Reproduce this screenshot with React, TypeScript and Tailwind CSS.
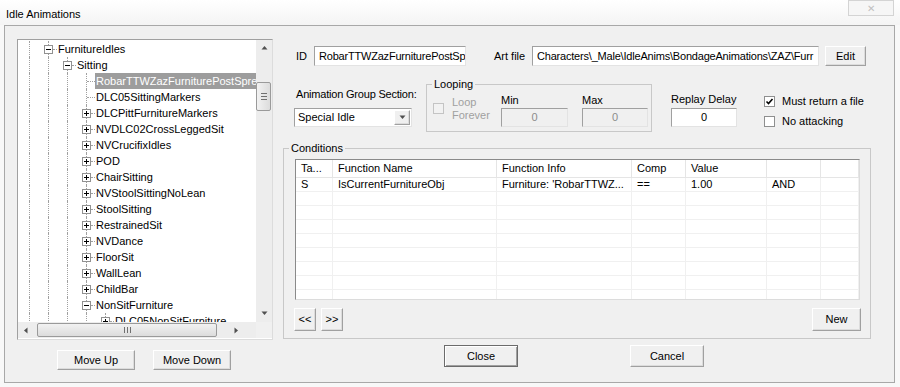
import React from "react";

type Cell = "line" | "tee" | "minus" | "plus";

const dot = "border-dotted border-[#a0a0a0]";

const TreeCell = ({ kind }: { kind: Cell }) => {
  if (kind === "line") {
    return (
      <div className="w-[19px] h-full flex shrink-0">
        <div className="w-[10px]" />
        <div className={`w-px h-full border-l ${dot}`} />
      </div>
    );
  }
  if (kind === "tee") {
    return (
      <div className="w-[19px] h-full flex items-center shrink-0">
        <div className="w-[10px]" />
        <div className={`w-px h-full border-l ${dot}`} />
        <div className={`flex-1 h-0 border-t ${dot}`} />
      </div>
    );
  }
  return (
    <div className="w-[19px] h-full flex items-center shrink-0">
      <div className="w-[6px]" />
      <div className="w-[9px] h-full flex flex-col items-center">
        <div className={`w-px flex-1 border-l ${dot}`} />
        <div className="w-[9px] h-[9px] shrink-0 border border-[#919191] bg-white flex items-center justify-center">
          <svg width="7" height="7" viewBox="0 0 7 7" shapeRendering="crispEdges">
            <path d="M1 3.5H6" stroke="#000" strokeWidth="1" />
            {kind === "plus" && <path d="M3.5 1V6" stroke="#000" strokeWidth="1" />}
          </svg>
        </div>
        <div className={`w-px flex-1 border-l ${dot}`} />
      </div>
      <div className={`flex-1 h-0 border-t ${dot}`} />
    </div>
  );
};

const treeRows: { cells: Cell[]; label: string; selected?: boolean }[] = [
  { cells: ["line", "minus"], label: "FurnitureIdles" },
  { cells: ["line", "line", "minus"], label: "Sitting" },
  { cells: ["line", "line", "line", "tee"], label: "RobarTTWZazFurniturePostSpread", selected: true },
  { cells: ["line", "line", "line", "tee"], label: "DLC05SittingMarkers" },
  { cells: ["line", "line", "line", "plus"], label: "DLCPittFurnitureMarkers" },
  { cells: ["line", "line", "line", "plus"], label: "NVDLC02CrossLeggedSit" },
  { cells: ["line", "line", "line", "plus"], label: "NVCrucifixIdles" },
  { cells: ["line", "line", "line", "plus"], label: "POD" },
  { cells: ["line", "line", "line", "plus"], label: "ChairSitting" },
  { cells: ["line", "line", "line", "plus"], label: "NVStoolSittingNoLean" },
  { cells: ["line", "line", "line", "plus"], label: "StoolSitting" },
  { cells: ["line", "line", "line", "plus"], label: "RestrainedSit" },
  { cells: ["line", "line", "line", "plus"], label: "NVDance" },
  { cells: ["line", "line", "line", "plus"], label: "FloorSit" },
  { cells: ["line", "line", "line", "plus"], label: "WallLean" },
  { cells: ["line", "line", "line", "plus"], label: "ChildBar" },
  { cells: ["line", "line", "line", "minus"], label: "NonSitFurniture" },
  { cells: ["line", "line", "line", "line", "plus"], label: "DLC05NonSitFurniture" },
];

const btn =
  "flex items-center justify-center bg-[#f0f0f0] border border-t-white border-l-white border-r-[#a0a0a0] border-b-[#a0a0a0] shadow-[inset_-1px_-1px_0_#dcdcdc]";
const sunken = "border border-t-[#a0a0a0] border-l-[#a0a0a0] border-r-[#e3e3e3] border-b-[#e3e3e3]";

const Tri = ({ dir }: { dir: "up" | "down" | "left" | "right" }) => {
  const d = {
    up: "M0.5 4.5L3.5 1L6.5 4.5Z",
    down: "M0.5 1.5L3.5 5L6.5 1.5Z",
    left: "M4.5 0.5L1 3.5L4.5 6.5Z",
    right: "M1.5 0.5L5 3.5L1.5 6.5Z",
  }[dir];
  return (
    <svg width="7" height="7" viewBox="0 0 7 7">
      <path d={d} fill="#505050" />
    </svg>
  );
};

const Check = ({ checked, disabled }: { checked?: boolean; disabled?: boolean }) => (
  <div
    className={`w-[11px] h-[11px] shrink-0 border flex items-center justify-center ${
      disabled ? "border-[#c4c4c4] bg-[#f2f2f2]" : "border-[#8e8f8f] bg-white"
    }`}
  >
    {checked && (
      <svg width="9" height="9" viewBox="0 0 9 9">
        <path d="M1.5 4.5L3.5 6.5L7.5 2" stroke="#000" strokeWidth="1.6" fill="none" />
      </svg>
    )}
  </div>
);

const cols = [37, 164, 135, 54, 81, 54, 38];
const headers = ["Ta...", "Function Name", "Function Info", "Comp", "Value", "", ""];
const rowData = ["S", "IsCurrentFurnitureObj", "Furniture: 'RobarTTWZ...", "==", "1.00", "AND", ""];

export default function App() {
  return (
    <div className="w-[900px] h-[387px] overflow-hidden bg-[#f8f8f8] text-[11px] text-black font-['Liberation_Sans',Arial,sans-serif]">
      {/* title bar */}
      <div className="h-[25px] flex items-start justify-between bg-gradient-to-b from-white to-[#f4f4f4]">
        <span className="pl-[6px] pt-[8px] leading-[13px]">Idle Animations</span>
        <div className="mr-[6px] w-[46px] h-[16px] border border-[#d4d4d4] bg-[#f6f6f6] flex items-center justify-center text-[10px] text-[#c0c0c0]">
          ✕
        </div>
      </div>

      {/* dialog body */}
      <div className="ml-[4px] w-[891px] h-[358px] border border-[#a8a8a8] bg-[#f0f0f0] flex">
        {/* left column */}
        <div className="ml-[12px] pt-[13px] w-[256px] flex flex-col shrink-0">
          <div className="w-[256px] h-[301px] border border-t-[#a0a0a0] border-l-[#a0a0a0] border-r-[#dcdcdc] border-b-[#dcdcdc] bg-white flex flex-col">
            <div className="flex h-[282px]">
              <div className="w-[238px] h-full overflow-hidden pl-[1px] pt-[1px]">
                {treeRows.map((r, i) => (
                  <div key={i} className="h-[16px] flex items-center">
                    {r.cells.map((c, j) => (
                      <TreeCell key={j} kind={c} />
                    ))}
                    <span
                      className={`pl-[1px] pr-[2px] leading-[16px] whitespace-nowrap ${
                        r.selected ? "bg-[#9d9d9d] text-white" : ""
                      }`}
                    >
                      {r.label}
                    </span>
                  </div>
                ))}
              </div>
              <div className="w-[16px] h-full bg-[#ededed] flex flex-col">
                <div className="h-[17px] flex items-center justify-center">
                  <Tri dir="up" />
                </div>
                <div className="flex-1">
                  <div className="mt-[25px] h-[29px] w-[15px] border border-[#9a9a9a] rounded-[2px] bg-gradient-to-r from-[#f2f2f2] to-[#dcdcdc] flex flex-col items-center justify-center gap-[2px]">
                    <div className="w-[6px] h-px bg-[#707070]" />
                    <div className="w-[6px] h-px bg-[#707070]" />
                    <div className="w-[6px] h-px bg-[#707070]" />
                  </div>
                </div>
                <div className="h-[17px] flex items-center justify-center">
                  <Tri dir="down" />
                </div>
              </div>
            </div>
            <div className="flex h-[16px]">
              <div className="w-[238px] h-full bg-[#ededed] flex items-center">
                <div className="w-[17px] h-full flex items-center justify-center">
                  <Tri dir="left" />
                </div>
                <div className="ml-[2px] w-[180px] h-[14px] border border-[#9a9a9a] rounded-[2px] bg-gradient-to-b from-[#f2f2f2] to-[#dcdcdc] flex items-center justify-center gap-[2px]">
                  <div className="w-px h-[6px] bg-[#707070]" />
                  <div className="w-px h-[6px] bg-[#707070]" />
                  <div className="w-px h-[6px] bg-[#707070]" />
                </div>
                <div className="flex-1 h-full flex items-center justify-center">
                  <Tri dir="right" />
                </div>
              </div>
              <div className="w-[16px] h-full bg-[#f0f0f0]" />
            </div>
          </div>
          <div className="mt-[10px] pl-[40px] flex gap-[18px]">
            <div className={`${btn} w-[78px] h-[20px]`}>Move Up</div>
            <div className={`${btn} w-[78px] h-[20px]`}>Move Down</div>
          </div>
        </div>

        {/* right column */}
        <div className="ml-[10px] w-[588px] flex flex-col shrink-0">
          {/* row 1 */}
          <div className="mt-[20px] h-[20px] pl-[13px] flex items-center">
            <span className="w-[18px]">ID</span>
            <div className={`${sunken} w-[152px] h-[20px] bg-white pl-[4px] overflow-hidden whitespace-nowrap leading-[18px] tracking-[-0.2px]`}>
              RobarTTWZazFurniturePostSp
            </div>
            <span className="ml-[28px] w-[38px]">Art file</span>
            <div className={`${sunken} w-[287px] h-[20px] bg-white pl-[4px] overflow-hidden whitespace-nowrap leading-[18px] tracking-[-0.2px]`}>
              {"Characters\\_Male\\IdleAnims\\BondageAnimations\\ZAZ\\Furr"}
            </div>
            <div className={`${btn} ml-[6px] w-[41px] h-[20px]`}>Edit</div>
          </div>

          {/* row 2 */}
          <div className="mt-[12px] pl-[11px] flex items-start">
            <div className="w-[118px] flex flex-col">
              <span className="mt-[10px] pl-[2px] leading-[13px] whitespace-nowrap tracking-[-0.2px]">
                Animation Group Section:
              </span>
              <div className={`${sunken} mt-[7px] h-[19px] bg-white flex items-center justify-between pl-[3px] pr-[1px]`}>
                <span>Special Idle</span>
                <div className={`${btn} w-[16px] h-[15px]`}>
                  <Tri dir="down" />
                </div>
              </div>
            </div>

            <fieldset className="ml-[14px] w-[226px] border border-[#c8c8c8]">
              <legend className="ml-[5px] px-[2px] leading-[13px]">Looping</legend>
              <div className="h-[40px] pl-[6px] flex items-start">
                <div className="mt-[12px]">
                  <Check disabled />
                </div>
                <div className="ml-[8px] mt-[5px] w-[48px] leading-[13px] text-[#a0a0a0]">
                  Loop
                  <br />
                  Forever
                </div>
                <div className="ml-[1px] w-[67px] flex flex-col">
                  <span className="mt-[3px] leading-[13px]">Min</span>
                  <div className={`${sunken} mt-[1px] h-[19px] bg-[#f0f0f0] flex items-center justify-center text-[#8c8c8c]`}>0</div>
                </div>
                <div className="ml-[14px] w-[66px] flex flex-col">
                  <span className="mt-[3px] leading-[13px]">Max</span>
                  <div className={`${sunken} mt-[1px] h-[19px] bg-[#f0f0f0] flex items-center justify-center text-[#8c8c8c]`}>0</div>
                </div>
              </div>
            </fieldset>

            <div className="ml-[19px] w-[66px] flex flex-col">
              <span className="mt-[15px] leading-[13px] whitespace-nowrap">Replay Delay</span>
              <div className={`${sunken} mt-[2px] h-[19px] bg-white flex items-center justify-center`}>0</div>
            </div>

            <div className="ml-[27px] mt-[17px] flex flex-col gap-[7px]">
              <div className="h-[13px] flex items-center gap-[7px]">
                <Check checked />
                <span>Must return a file</span>
              </div>
              <div className="h-[13px] flex items-center gap-[7px]">
                <Check />
                <span>No attacking</span>
              </div>
            </div>
          </div>

          {/* conditions */}
          <fieldset className="mt-[10px] w-[588px] border border-[#c8c8c8]">
            <legend className="ml-[5px] px-[2px] leading-[13px]">Conditions</legend>
            <div className="mt-[4px] ml-[11px] w-[565px] h-[141px] border border-t-[#8a8a8a] border-l-[#8a8a8a] border-r-[#dcdcdc] border-b-[#dcdcdc] bg-white overflow-hidden">
              <div className="flex h-[18px] border-b border-[#e5e5e5]">
                {headers.map((h, i) => (
                  <div
                    key={i}
                    style={{ width: cols[i] }}
                    className="shrink-0 h-full border-r border-[#e5e5e5] pl-[5px] leading-[17px] whitespace-nowrap overflow-hidden"
                  >
                    {h}
                  </div>
                ))}
              </div>
              {Array.from({ length: 9 }).map((_, r) => (
                <div key={r} className="flex h-[14px] border-b border-[#f0f0f0]">
                  {cols.map((w, i) => (
                    <div
                      key={i}
                      style={{ width: w }}
                      className="shrink-0 h-full border-r border-[#f0f0f0] pl-[5px] leading-[13px] whitespace-nowrap overflow-hidden"
                    >
                      {r === 0 ? rowData[i] : ""}
                    </div>
                  ))}
                </div>
              ))}
            </div>
            <div className="mt-[8px] mb-[7px] pl-[10px] pr-[9px] flex items-center justify-between">
              <div className="flex gap-[5px]">
                <div className={`${btn} w-[22px] h-[23px]`}>&lt;&lt;</div>
                <div className={`${btn} w-[22px] h-[23px]`}>&gt;&gt;</div>
              </div>
              <div className={`${btn} w-[49px] h-[23px]`}>New</div>
            </div>
          </fieldset>

          {/* bottom buttons */}
          <div className="mt-[6px] pl-[161px] flex gap-[112px]">
            <div className="w-[74px] h-[22px] border border-[#6b6b6b] bg-[#f0f0f0] shadow-[inset_1px_1px_0_#fff,inset_-1px_-1px_0_#a0a0a0] flex items-center justify-center">
              Close
            </div>
            <div className={`${btn} w-[74px] h-[22px]`}>Cancel</div>
          </div>
        </div>
      </div>
    </div>
  );
}
